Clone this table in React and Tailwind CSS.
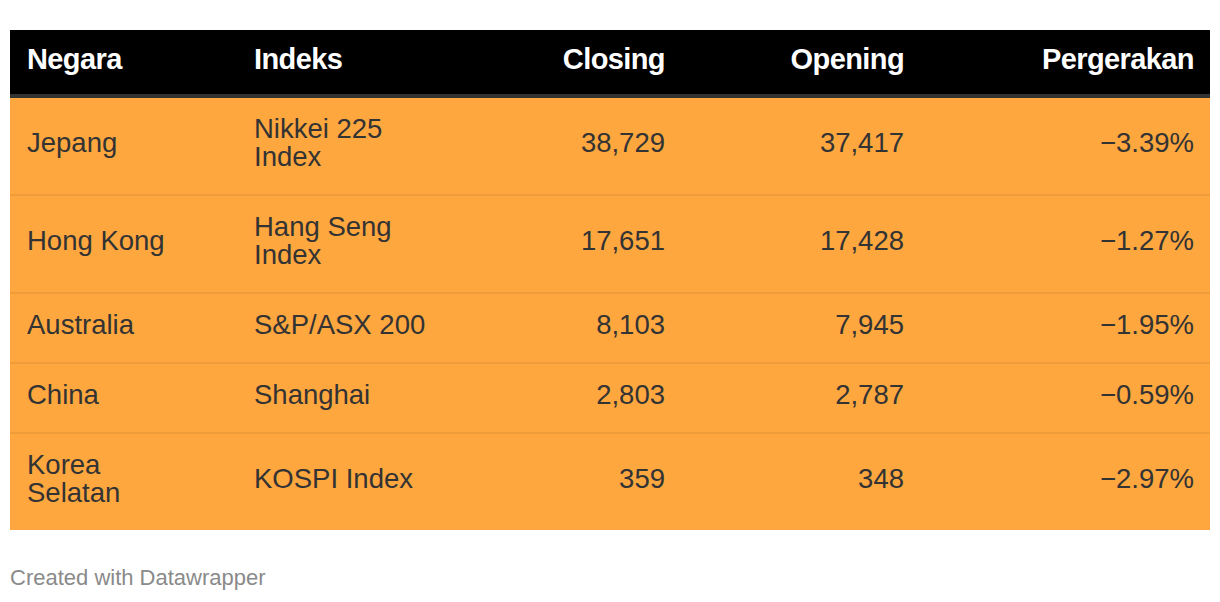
const rows = [
  { negara: "Jepang", indeks: "Nikkei 225 Index", closing: "38,729", opening: "37,417", gerak: "\u22123.39%" },
  { negara: "Hong Kong", indeks: "Hang Seng Index", closing: "17,651", opening: "17,428", gerak: "\u22121.27%" },
  { negara: "Australia", indeks: "S&P/ASX 200", closing: "8,103", opening: "7,945", gerak: "\u22121.95%" },
  { negara: "China", indeks: "Shanghai", closing: "2,803", opening: "2,787", gerak: "\u22120.59%" },
  { negara: "Korea Selatan", indeks: "KOSPI Index", closing: "359", opening: "348", gerak: "\u22122.97%" },
];

export default function App() {
  return (
    <div className="bg-white w-[1220px] h-[602px] px-[10px] pt-[30px] font-['Liberation_Sans',Arial,sans-serif]">
      <table className="w-[1200px] table-fixed border-collapse">
        <colgroup>
          <col className="w-[227px]" />
          <col className="w-[227px]" />
          <col className="w-[218px]" />
          <col className="w-[239px]" />
          <col className="w-[289px]" />
        </colgroup>
        <thead>
          <tr className="bg-black text-white border-b-4 border-[#333333] text-[29px] font-bold tracking-[-0.6px]">
            <th className="h-[66px] pl-[17px] pr-[50px] pb-[5px] text-left">Negara</th>
            <th className="px-[17px] pb-[5px] text-left">Indeks</th>
            <th className="px-[17px] pb-[5px] text-right">Closing</th>
            <th className="px-[17px] pb-[5px] text-right">Opening</th>
            <th className="px-[16px] pb-[5px] text-right">Pergerakan</th>
          </tr>
        </thead>
        <tbody className="bg-[#fea73f] text-[#333333] text-[27.5px] leading-[28px]">
          {rows.map((r, i) => (
            <tr key={r.negara} className={i < rows.length - 1 ? "border-b-2 border-[#ef9d3a]" : ""}>
              <td className="pl-[17px] pr-[50px] pt-[17px] pb-[23px] align-middle">{r.negara}</td>
              <td className="px-[17px] pt-[17px] pb-[23px] align-middle">{r.indeks}</td>
              <td className="px-[17px] pt-[17px] pb-[23px] text-right align-middle">{r.closing}</td>
              <td className="px-[17px] pt-[17px] pb-[23px] text-right align-middle">{r.opening}</td>
              <td className="px-[16px] pt-[17px] pb-[23px] text-right align-middle">{r.gerak}</td>
            </tr>
          ))}
        </tbody>
      </table>
      <div className="mt-[35px] text-[22px] text-[#8a8a8a] leading-[26px]">Created with Datawrapper</div>
    </div>
  );
}
